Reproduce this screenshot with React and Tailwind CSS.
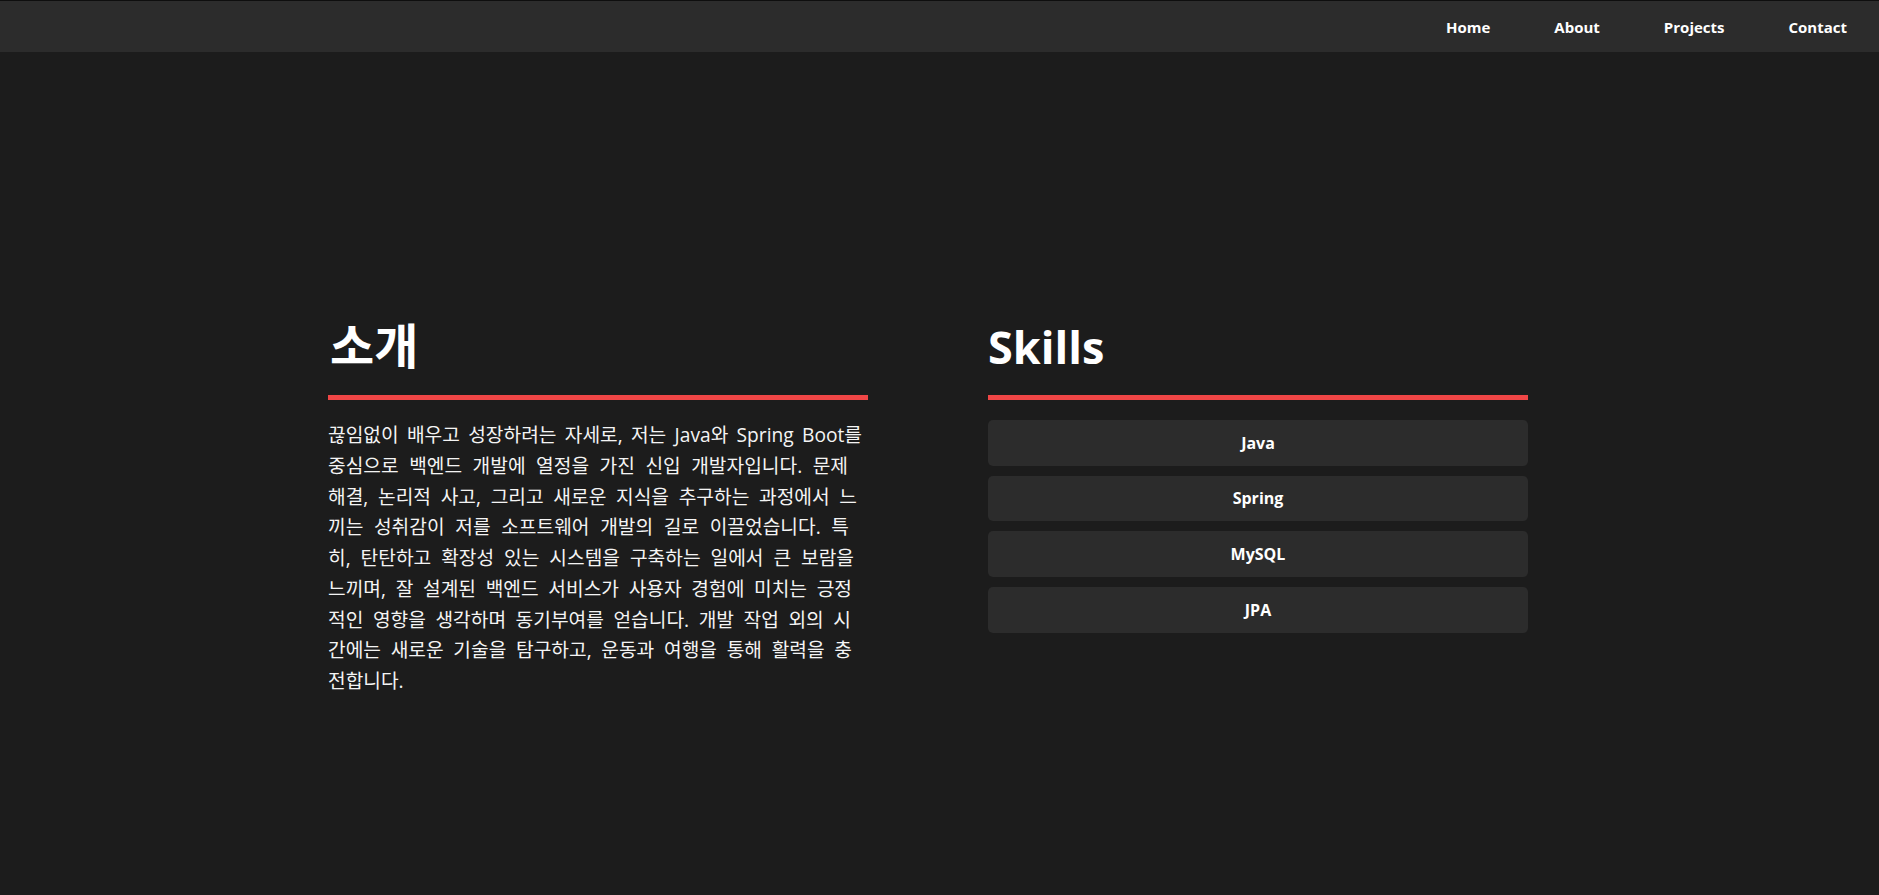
export default function App() {
  const lines = [
    ["끊임없이 배우고 성장하려는 자세로, 저는 Java와 Spring Boot를", "w-[534px]"],
    ["중심으로 백엔드 개발에 열정을 가진 신입 개발자입니다. 문제", "w-[520px]"],
    ["해결, 논리적 사고, 그리고 새로운 지식을 추구하는 과정에서 느", "w-[529px]"],
    ["끼는 성취감이 저를 소프트웨어 개발의 길로 이끌었습니다. 특", "w-[521px]"],
    ["히, 탄탄하고 확장성 있는 시스템을 구축하는 일에서 큰 보람을", "w-[526px]"],
    ["느끼며, 잘 설계된 백엔드 서비스가 사용자 경험에 미치는 긍정", "w-[524px]"],
    ["적인 영향을 생각하며 동기부여를 얻습니다. 개발 작업 외의 시", "w-[523px]"],
    ["간에는 새로운 기술을 탐구하고, 운동과 여행을 통해 활력을 충", "w-[524px]"],
  ];
  const skills = ["Java", "Spring", "MySQL", "JPA"];
  const font = { fontFamily: '"Open Sans", "Noto Sans CJK KR", sans-serif' };
  return (
    <div className="min-h-screen w-full bg-[#1c1c1c] text-white" style={font}>
      <nav className="flex h-[52px] items-center justify-end border-t border-[#0e0e0e] bg-[#2c2c2c] pt-[1px]">
        {["Home", "About", "Projects", "Contact"].map((n) => (
          <a key={n} className="px-8 text-[15px] font-bold text-white">
            {n}
          </a>
        ))}
      </nav>
      <main className="mx-auto flex w-[1223px] gap-[120px] pt-[270px]">
        <section className="w-[540px]">
          <h2 className="border-b-[5px] border-[#f04646] pb-[25px] pl-[2px] text-[48px] font-bold leading-[48px]">
            소개
          </h2>
          <p className="mt-[20px] text-[19.2px] leading-[30.75px] text-[#f4f4f4]">
            {lines.map(([l, w], i) => (
              <span key={i} className={`block text-justify [text-align-last:justify] ${w}`}>
                {l}
              </span>
            ))}
            <span className="block">전합니다.</span>
          </p>
        </section>
        <section className="w-[540px]">
          <h2 className="border-b-[5px] border-[#f04646] pb-[24px] pt-[1px] text-[45px] font-bold leading-[48px]">
            Skills
          </h2>
          <div className="mt-[20px] flex flex-col gap-[10px]">
            {skills.map((s) => (
              <div
                key={s}
                className="flex h-[45.67px] items-center justify-center rounded-[5px] bg-[#2c2c2c] text-[16px] font-bold"
              >
                {s}
              </div>
            ))}
          </div>
        </section>
      </main>
    </div>
  );
}
